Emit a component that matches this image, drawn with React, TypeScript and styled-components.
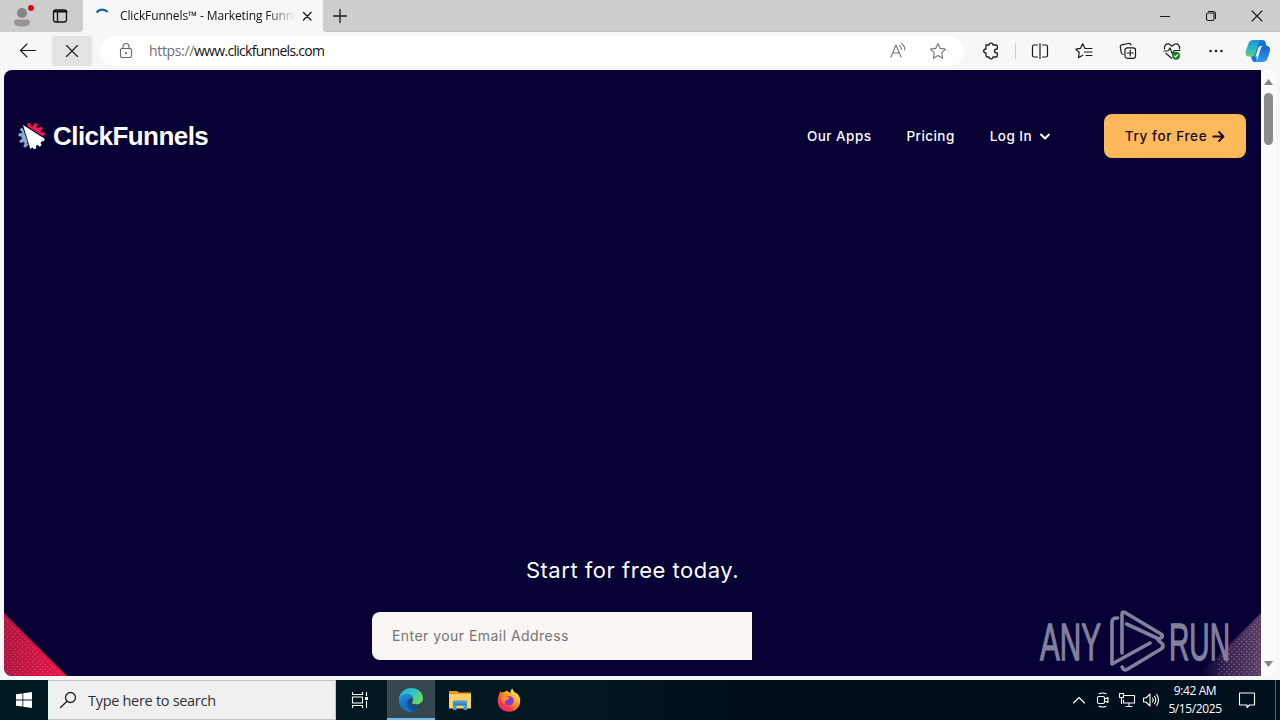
import React from 'react';
import styled, { createGlobalStyle } from 'styled-components';

const GlobalStyle = createGlobalStyle`
  *, *::before, *::after { box-sizing: border-box; }
  html, body { margin: 0; padding: 0; overflow: hidden; }
  svg { display: block; flex: none; }
`;

const uiFont = `"Open Sans", "Noto Sans", sans-serif`;
const siteFont = `Inter, "Liberation Sans", sans-serif`;

const Desktop = styled.div`
  width: 1280px;
  height: 720px;
  display: flex;
  flex-direction: column;
  background: #f7f7f7;
  font-family: ${uiFont};
  color: #111;
  overflow: hidden;
`;

/* ---------- tab strip ---------- */

const TabStrip = styled.div`
  display: flex;
  height: 32px;
  flex: none;
  background: #f7f7f7;
`;

const StripLeft = styled.div`
  width: 83px;
  height: 32px;
  display: flex;
  align-items: center;
  background: #cdcdcd;
  border-bottom-right-radius: 4px;
  padding-left: 10px;
  gap: 14px;
`;

const Tab = styled.div`
  width: 240px;
  height: 32px;
  display: flex;
  align-items: center;
  background: #f7f7f7;
  padding: 0 8px 0 12px;
`;

const TabTitle = styled.div`
  width: 177px;
  margin-left: 10px;
  margin-right: 2px;
  overflow: hidden;
  white-space: nowrap;
  font-size: 12px;
  line-height: 18px;
  letter-spacing: -0.12px;
  mask-image: linear-gradient(90deg, #000 146px, transparent 176px);
`;

const StripRest = styled.div`
  flex: 1;
  height: 32px;
  display: flex;
  align-items: center;
  background: #cdcdcd;
  border-bottom: 1px solid #c0c0c0;
  border-bottom-left-radius: 4px;
  padding-left: 9px;
`;

const WindowButtons = styled.div`
  display: flex;
  margin-left: auto;
`;

const WindowButton = styled.div`
  width: 46px;
  display: flex;
  align-items: center;
  justify-content: center;
`;

/* ---------- toolbar ---------- */

const Toolbar = styled.div`
  display: flex;
  align-items: center;
  height: 38px;
  flex: none;
  padding-left: 8px;
`;

const ToolButton = styled.div<{ $w: number; $active?: boolean }>`
  width: ${(p) => p.$w}px;
  height: 30px;
  display: flex;
  align-items: center;
  justify-content: center;
  border-radius: 4px;
  background: ${(p) => (p.$active ? '#e3e3e3' : 'transparent')};
`;

const Navigation = styled.div`
  display: flex;
  gap: 4px;
`;

const AddressBar = styled.div`
  width: 864px;
  height: 30px;
  margin-left: 8px;
  margin-right: 5px;
  padding: 0 16px;
  display: flex;
  align-items: center;
  border-radius: 15px;
  background: #fff;
`;

const Url = styled.div`
  flex: 1;
  margin-left: 13px;
  font-size: 14px;
  line-height: 20px;
  letter-spacing: -0.35px;
  white-space: nowrap;
`;

const Scheme = styled.span`
  color: #707070;
`;

const Host = styled.span`
  color: #111;
  letter-spacing: -0.7px;
`;

const AddressActions = styled.div`
  display: flex;
  gap: 20px;
`;

const Divider = styled.div`
  width: 1px;
  height: 16px;
  margin: 0 2px;
  background: #cfcfcf;
`;

/* ---------- page ---------- */

const Viewport = styled.div`
  display: flex;
  height: 606px;
  margin: 0 4px 4px;
  border-radius: 8px;
  overflow: hidden;
  background: #fcfcfc;
`;

const Page = styled.main`
  position: relative;
  width: 1257px;
  height: 606px;
  background: #060034;
  font-family: ${siteFont};
  color: #fff;
  display: flex;
  flex-direction: column;
`;

const Header = styled.header`
  display: flex;
  align-items: center;
  height: 44px;
  margin-top: 44px;
  padding: 0 15px 0 14px;
`;

const BrandName = styled.div`
  margin-left: 7px;
  font-family: "Liberation Sans", Arial, sans-serif;
  font-size: 26px;
  line-height: 30px;
  font-weight: 700;
  letter-spacing: -0.55px;
`;

const Nav = styled.nav`
  display: flex;
  margin-left: auto;
  align-items: center;
  gap: 35px;
  margin-right: 53px;
  padding-bottom: 1px;
`;

const NavLink = styled.a`
  display: flex;
  align-items: center;
  gap: 7px;
  font-size: 13.5px;
  line-height: 20px;
  font-weight: 500;
  letter-spacing: 0.45px;
  white-space: nowrap;
`;

const CtaButton = styled.button`
  width: 142px;
  height: 44px;
  border: 0;
  border-radius: 8px;
  background: #ffb95a;
  color: #17072d;
  font: 500 13.5px/20px ${siteFont};
  letter-spacing: 0.62px;
  display: flex;
  align-items: center;
  justify-content: center;
  gap: 5px;
  padding: 0;
  white-space: nowrap;
`;

const Heading = styled.h2`
  margin: 397px 0 0;
  height: 30px;
  font-size: 22px;
  line-height: 30px;
  font-weight: 400;
  letter-spacing: 0.52px;
  text-align: center;
`;

const EmailField = styled.div`
  width: 380px;
  height: 48px;
  margin: 27px 0 0 368px;
  padding-left: 20px;
  border-radius: 8px 0 0 8px;
  background: #faf6f3;
  color: #757575;
  font-size: 14px;
  line-height: 48px;
  letter-spacing: 0.45px;
`;

const Corner = styled.div<{ $side: 'left' | 'right' }>`
  position: absolute;
  bottom: 0;
  ${(p) => p.$side}: 0;
`;

const Watermark = styled.div`
  position: absolute;
  right: 28px;
  bottom: 2px;
`;

const ScrollBar = styled.div`
  width: 15px;
  display: flex;
  flex-direction: column;
  align-items: center;
  padding: 9px 0 9px;
`;

const Thumb = styled.div`
  width: 9px;
  height: 52px;
  margin-top: 8px;
  border-radius: 5px;
  background: #8b8b8b;
`;

const ScrollDown = styled.div`
  margin-top: auto;
`;

/* ---------- taskbar ---------- */

const Taskbar = styled.footer`
  display: flex;
  height: 40px;
  flex: none;
  background: linear-gradient(90deg, #001820 0, #001720 45%, #000d1c 60%, #00101c 100%);
`;

const TaskItem = styled.div<{ $w?: number; $active?: boolean }>`
  width: ${(p) => p.$w ?? 48}px;
  height: 40px;
  display: flex;
  align-items: center;
  justify-content: center;
  background: ${(p) => (p.$active ? '#34484e' : 'transparent')};
  border-bottom: ${(p) => (p.$active ? '2px solid #76b9ed' : '0')};
  padding-top: ${(p) => (p.$active ? '2px' : '0')};
`;

const Search = styled.div`
  width: 288px;
  height: 40px;
  display: flex;
  align-items: center;
  padding-left: 11px;
  gap: 11px;
  border: 1px solid #c4c4c4;
  border-left: 0;
  background: #f0f0f0;
  color: #303030;
  font-size: 14.5px;
  letter-spacing: -0.3px;
`;

const Apps = styled.div`
  display: flex;
  margin-left: 3px;
  gap: 1px;
`;

const Tray = styled.div`
  display: flex;
  margin-left: auto;
  color: #fff;
`;

const Clock = styled.div`
  width: 64px;
  text-align: center;
  font-size: 12px;
  line-height: 18px;
  letter-spacing: -0.4px;
  padding-top: 2px;
`;

const ShowDesktop = styled.div`
  width: 5px;
  border-left: 1px solid #59646b;
`;

/* ---------- icons ---------- */

type IconProps = {
  w?: number;
  h?: number;
  color?: string;
  sw?: number;
  children: React.ReactNode;
};

const Icon = ({ w = 20, h, color = '#1b1b1b', sw = 1.1, children }: IconProps) => (
  <svg
    width={w}
    height={h ?? w}
    viewBox={`0 0 ${w} ${h ?? w}`}
    fill="none"
    stroke={color}
    strokeWidth={sw}
    strokeLinecap="round"
    strokeLinejoin="round"
  >
    {children}
  </svg>
);

const STAR = 'M10 2.500l2.300 4.900 5.200.700-3.800 3.700.900 5.400-4.600-2.600-4.600 2.600.900-5.400-3.800-3.700 5.200-.700z';

const CopilotIcon = () => (
  <svg width="26" height="26" viewBox="0 0 26 26">
    <defs>
      <linearGradient id="cpA" x1="0" y1="0" x2="0" y2="1">
        <stop offset="0" stopColor="#1b93d8" />
        <stop offset=".5" stopColor="#25b7c8" />
        <stop offset="1" stopColor="#5fd07a" />
      </linearGradient>
      <linearGradient id="cpB" x1="0" y1="0" x2="0" y2="1">
        <stop offset="0" stopColor="#1a5fc4" />
        <stop offset="1" stopColor="#2a9df2" />
      </linearGradient>
    </defs>
    <path d="M13 2h4.500q2.300 0 3 2.300L21.500 8H17q-2 0-2.700 2.300L12 18q-1.500 6 2 6H10q-2.500 0-3.200-2.500L6 18l5-14z" fill="#1672d6" />
    <path d="M8.500 2H16q-1.800 1-2.500 3.500L10.500 15q-1 3.500-4 3.500H4q-4.500 0-3-6L3.700 5Q4.800 2 8.500 2z" fill="url(#cpA)" />
    <path d="M18 8h3.500q4.500 0 3.300 5.500l-2.500 7.500q-1.200 3-4.600 3H10q2-.8 2.700-3.200L15.500 11q.7-3 2.500-3z" fill="url(#cpB)" />
    <path d="M13.300 10q.6-1.700 2-2H17q-1.400.6-2 3l-1.500 5q-.6 2-2 2.500H9.800q1-.6 1.500-2.500z" fill="#f2fbff" />
  </svg>
);

const TOOTH = 'M-2 -9L-1.300 -13.300H1.300L2 -9z';

const BrandMark = () => (
  <svg width="28" height="28" viewBox="0 0 28 28">
    <g transform="translate(13.800 14)">
      <g fill="#f0194f">
        <path d="M-5 -8.500A10 10 0 0 1 10 0L6 1z" />
        {[-14, 18, 50, 80].map((a) => (
          <path key={a} d={TOOTH} transform={`rotate(${a})`} />
        ))}
      </g>
      <g fill="#86a9d2">
        <path d="M-7.500 -7A10 10 0 0 0 -5 8.800L-2 0z" />
        {[-84, -116, -146, -58].map((a) => (
          <path key={a} d={TOOTH} transform={`rotate(${a})`} />
        ))}
      </g>
      <path d="M-9.500 -12L13 2.500 9 8-1 13.500z" fill="#fff" stroke="#060034" strokeWidth="1.600" />
      <g fill="#fff">
        <path d="M10 2.500A10 10 0 0 1 -1.500 10L0 0z" />
        {[108, 138, 166].map((a) => (
          <path key={a} d={TOOTH} transform={`rotate(${a})`} />
        ))}
        <path d="M-8.800 -11L12.500 2.600 6 5-1.500 13z" />
      </g>
    </g>
  </svg>
);

const EdgeIcon = () => (
  <svg width="26" height="26" viewBox="0 0 26 26">
    <defs>
      <linearGradient id="edTop" x1="0" y1="0" x2="1" y2=".6">
        <stop offset="0" stopColor="#2aa7dd" />
        <stop offset=".5" stopColor="#2dc2c9" />
        <stop offset="1" stopColor="#65dd62" />
      </linearGradient>
      <linearGradient id="edMid" x1="0" y1="0" x2=".6" y2="1">
        <stop offset="0" stopColor="#2398df" />
        <stop offset="1" stopColor="#0b58b0" />
      </linearGradient>
    </defs>
    <path d="M1 13C1 6 6.500 1 13 1c7 0 12 4.700 12 10 0 4-3 6.300-6.500 6.300-3 0-4.500-1-4.500-2 0-.8 1.200-1.200 1.200-3C15.200 9.800 12.500 7.500 9 7.500c-4 0-7 2.500-8 5.500z" fill="url(#edTop)" />
    <path d="M1 13c.5-3.500 3.800-6 8-6 3.700 0 6.200 2.300 6.200 5-1-1.600-5.700-1-5.700 3.500 0 5 4.500 8 8.500 7.700C11 27.500 1 23 1 13z" fill="url(#edMid)" />
    <path d="M9.500 15c-.8 3.700 2.500 7.500 7.500 7.500 3 0 5.500-1.700 7-3.700.4-.5 0-.8-.5-.6-5 2.400-12 .6-11.300-5.700-1.400.3-2.400 1.200-2.700 2.500z" fill="#124c93" />
    <path d="M9 16c-2 5 3.500 9.700 8 8.400-7 2-12.500-1-12-6 .2-2.500 2-5.500 6-6.400-1 .8-1.700 2-2 4z" fill="#1673c7" />
  </svg>
);

const ExplorerIcon = () => (
  <svg width="22" height="20" viewBox="0 0 22 20">
    <path d="M0 1h8l2 1.500h12V7H0z" fill="#e59a24" />
    <path d="M0 4h22v14.500H0z" fill="#fad165" />
    <path d="M4 20v-8q0-1.500 1.500-1.500h11Q18 10.500 18 12v8h-3.500v-4h-7v4z" fill="#4a9ad2" />
    <path d="M4 13.500h14V15H4z" fill="#347eb5" />
  </svg>
);

const FirefoxIcon = () => (
  <svg width="24" height="24" viewBox="0 0 24 24">
    <defs>
      <linearGradient id="ff" x1=".85" y1=".1" x2=".15" y2=".9">
        <stop offset="0" stopColor="#fff04a" />
        <stop offset=".4" stopColor="#ff9a24" />
        <stop offset=".75" stopColor="#ff3a48" />
        <stop offset="1" stopColor="#e7217f" />
      </linearGradient>
    </defs>
    <path d="M2.500 5.500C2.600 4.500 3 3.700 3.600 3l.6 2C5 4.200 6.200 3.700 7.600 4 9 2 10 2.500 11 3.500L13.500 5C13.500 3 14 1.500 15.500.500c.2 2.200 2 3.300 3.500 5l.8-.5c2.400 2.500 3.400 5 3.400 8 0 6-5 10.800-11.200 10.800S.700 19.200.700 13c0-2.800.7-5.300 1.800-7.500z" fill="url(#ff)" />
    <circle cx="12" cy="12.700" r="4.700" fill="#7c3fd6" />
    <path d="M4.500 9c2-1.500 3.500-1.200 5-.5L13 9.500c0 1.500-3 1.500-3.200 3C8 12.500 7 14 8 16c-3-1-4.500-4-3.500-7z" fill="#ff8a27" />
  </svg>
);

const AnyRunMark = () => (
  <svg width="194" height="64" viewBox="0 0 194 64">
    <g
      fill="#82809c"
      stroke="#82809c"
      strokeWidth="1.300"
      fontFamily='"Liberation Sans", sans-serif'
      fontSize="51"
    >
      <text x="1" y="49.500" textLength="61" lengthAdjust="spacingAndGlyphs">ANY</text>
      <text x="130" y="49.500" textLength="61" lengthAdjust="spacingAndGlyphs">RUN</text>
    </g>
    <g fill="none" stroke="#82809c" strokeWidth="3.600" strokeLinejoin="round" strokeLinecap="round">
      <path d="M78.500 8q-5.500-.5-5.500 4v42L111 33" />
      <path d="M83 43V4q0-3 3-1.500L122 24q2.500 2 .5 3.500L120 29 87.500 14" />
      <path d="M83 57q2 4 5 2.500L122 39q3-2 1.500-5L119 30" />
    </g>
  </svg>
);

export default function App() {
  return (
    <Desktop>
      <GlobalStyle />
      <TabStrip>
        <StripLeft>
          <svg width="26" height="28" viewBox="0 0 26 28">
            <circle cx="12" cy="11" r="5" fill="#858585" />
            <path d="M4 20q0-2.500 2.500-2.500h11Q20 17.500 20 20q0 4.500-8 4.500T4 20z" fill="#9a9592" />
            <circle cx="21" cy="6" r="3" fill="#e3001b" />
          </svg>
          <Icon w={20} color="#111" sw={1.3}>
            <rect x="3.500" y="4" width="13" height="12" rx="2.500" />
            <path d="M4 5.500h12.500" strokeWidth="2.200" />
            <path d="M7.500 6v9.500" />
          </Icon>
        </StripLeft>
        <Tab>
          <Icon w={15} h={16} color="#1c63a8" sw={2.2}>
            <path d="M1.500 4.500C4.500.8 9.700.8 12.700 4" strokeLinecap="butt" />
          </Icon>
          <TabTitle>ClickFunnels™ - Marketing Funnels</TabTitle>
          <Icon w={16} sw={1.4}>
            <path d="M4.500 4.500l7.500 7.500M12 4.500L4.500 12" />
          </Icon>
        </Tab>
        <StripRest>
          <Icon w={16} sw={1.3}>
            <path d="M8 1.500v13M1.500 8h13" />
          </Icon>
          <WindowButtons>
            <WindowButton>
              <Icon w={12}><path d="M1.500 6.500h9" /></Icon>
            </WindowButton>
            <WindowButton>
              <Icon w={12}>
                <rect x="1.500" y="3" width="7.500" height="7.500" rx="1.500" />
                <path d="M3.500 1.500H8Q10.500 1.500 10.500 4v4.500" />
              </Icon>
            </WindowButton>
            <WindowButton>
              <Icon w={12}><path d="M1 1l10 10M11 1L1 11" /></Icon>
            </WindowButton>
          </WindowButtons>
        </StripRest>
      </TabStrip>

      <Toolbar>
        <Navigation>
          <ToolButton $w={40}>
            <Icon><path d="M2.500 9.500h15M9 3L2.500 9.500 9 16" /></Icon>
          </ToolButton>
          <ToolButton $w={40} $active>
            <Icon><path d="M4.500 4.500l11 11M15.500 4.500l-11 11" /></Icon>
          </ToolButton>
        </Navigation>
        <AddressBar>
          <Icon color="#666">
            <rect x="4.500" y="7.500" width="11" height="9" rx="1.500" />
            <path d="M7 7.500V5.500a3 3 0 016 0v2" />
            <circle cx="10" cy="12" r=".5" fill="#666" />
          </Icon>
          <Url>
            <Scheme>https://</Scheme>
            <Host>www.clickfunnels.com</Host>
          </Url>
          <AddressActions>
            <Icon color="#777">
              <path d="M3 16L8 4l5 12M4.800 12h6.500" />
              <path d="M11.500 4.500q2 1.500 2 4M13.500 2.500q3.500 2.500 3.300 6.500" />
            </Icon>
            <Icon color="#777"><path d={STAR} /></Icon>
          </AddressActions>
        </AddressBar>
        <ToolButton $w={44}>
          <Icon sw={1.3}>
            <path d="M5 4h3q0-1.800 2-1.800T12 4h3q1.300 0 1.300 1.300V8q-2.800 0-2.800 2t2.800 2v2.700q0 1.300-1.300 1.300h-3q0 1.800-2 1.800T8 16H6.500Q5 16 5 14.500V12q-2.300 0-2.300-2T5 8z" />
          </Icon>
        </ToolButton>
        <Divider />
        <ToolButton $w={44}>
          <Icon sw={1.2}>
            <path d="M7.500 4H4Q2.500 4 2.500 5.500v9Q2.500 16 4 16h3.500M12.500 4H16q1.500 0 1.500 1.500v9Q17.500 16 16 16h-3.500M10 2.500v15" />
          </Icon>
        </ToolButton>
        <ToolButton $w={44}>
          <Icon sw={1.2}>
            <path d="M11 7.500L8.700 2.800 6.500 7.300l-4.700.8 3.500 3.400-.9 5.200 4.400-2.400M11 7.500h7M10.500 11H18M12 14.500h6" />
          </Icon>
        </ToolButton>
        <ToolButton $w={44}>
          <Icon sw={1.2}>
            <rect x="7" y="6.800" width="10.500" height="10.500" rx="2.200" />
            <path d="M5 13.500Q3.500 13 3.200 11.500L2.300 6Q2 4.300 3.700 3.800L10.500 2.500q2-.3 2.500 1.500M12.200 9v6M9.200 12h6" />
          </Icon>
        </ToolButton>
        <ToolButton $w={44}>
          <Icon sw={1.2}>
            <path d="M2.500 8Q2 5.500 3.500 4t4-.8L10 5.200l2.500-2q2.500-.8 4 .8t1 4M2 10h4l2-3 2.500 6 1.800-3.500H18M4 12.200l5.500 5" />
            <circle cx="14" cy="14.700" r="4" fill="#14821d" stroke="none" />
            <path d="M12.300 14.900l1.200 1.200 2.300-2.500" stroke="#fff" />
          </Icon>
        </ToolButton>
        <ToolButton $w={44}>
          <Icon>
            <g fill="#222" stroke="none">
              <circle cx="4.500" cy="10" r="1.300" />
              <circle cx="10" cy="10" r="1.300" />
              <circle cx="15.500" cy="10" r="1.300" />
            </g>
          </Icon>
        </ToolButton>
        <ToolButton $w={40}>
          <CopilotIcon />
        </ToolButton>
      </Toolbar>

      <Viewport>
        <Page>
          <Header>
            <BrandMark />
            <BrandName>ClickFunnels</BrandName>
            <Nav>
              <NavLink>Our Apps</NavLink>
              <NavLink>Pricing</NavLink>
              <NavLink>
                Log In
                <Icon w={12} color="#fff" sw={2}>
                  <path d="M2 4.500l4 4 4-4" />
                </Icon>
              </NavLink>
            </Nav>
            <CtaButton>
              Try for Free
              <Icon w={13} color="#17072d" sw={1.8}>
                <path d="M1.200 6.500h10M7 2l4.500 4.500L7 11" />
              </Icon>
            </CtaButton>
          </Header>
          <Heading>Start for free today.</Heading>
          <EmailField>Enter your Email Address</EmailField>
          <Corner $side="left">
            <svg width="63" height="63" viewBox="0 0 63 63">
              <defs>
                <linearGradient id="red" x1="0" y1="0" x2="1" y2="0">
                  <stop offset="0" stopColor="#ae1540" />
                  <stop offset="1" stopColor="#ec1448" />
                </linearGradient>
                <pattern id="dots" width="5" height="5" patternUnits="userSpaceOnUse">
                  <circle cx="1.200" cy="1.200" r=".7" fill="#e0708a" opacity=".6" />
                  <circle cx="3.700" cy="3.700" r=".7" fill="#e0708a" opacity=".6" />
                </pattern>
              </defs>
              <path d="M0 0l63 63H0z" fill="url(#red)" />
              <path d="M0 2l61 61H0z" fill="url(#dots)" />
            </svg>
          </Corner>
          <Corner $side="right">
            <svg width="63" height="63" viewBox="0 0 63 63">
              <defs>
                <linearGradient id="mauve" x1="0" y1="0" x2="1" y2="0">
                  <stop offset="0" stopColor="#4c3560" stopOpacity="0" />
                  <stop offset=".5" stopColor="#4c3560" stopOpacity=".7" />
                  <stop offset="1" stopColor="#5c3f68" />
                </linearGradient>
                <pattern id="dots2" width="5" height="5" patternUnits="userSpaceOnUse">
                  <circle cx="1.200" cy="1.200" r=".8" fill="#b48b8e" opacity=".65" />
                  <circle cx="3.700" cy="3.700" r=".8" fill="#b48b8e" opacity=".65" />
                </pattern>
              </defs>
              <path d="M63 0L0 63h63z" fill="url(#mauve)" />
              <path d="M63 4L20 47v16h43z" fill="url(#dots2)" />
            </svg>
          </Corner>
          <Watermark>
            <AnyRunMark />
          </Watermark>
        </Page>
        <ScrollBar>
          <svg width="9" height="6" viewBox="0 0 9 6"><path d="M4.500 0L9 6H0z" fill="#858585" /></svg>
          <Thumb />
          <ScrollDown>
            <svg width="9" height="6" viewBox="0 0 9 6"><path d="M0 0h9L4.500 6z" fill="#858585" /></svg>
          </ScrollDown>
        </ScrollBar>
      </Viewport>

      <Taskbar>
        <TaskItem>
          <svg width="16" height="16" viewBox="0 0 16 16">
            <path d="M0 2.300l6.500-.9v6.200H0zM7.300 1.300L16 0v7.600H7.300zM0 8.400h6.500v6.200L0 13.700zM7.300 8.400H16V16l-8.700-1.300z" fill="#fff" />
          </svg>
        </TaskItem>
        <Search>
          <Icon w={18} sw={1.3} color="#222">
            <circle cx="11.500" cy="6.500" r="5" />
            <path d="M8 10.200L1.500 16.500" />
          </Icon>
          Type here to search
        </Search>
        <TaskItem>
          <Icon w={18} color="#fff">
            <path d="M1.500 1v2.500h10V1M1.500 17v-2.500h10V17M15.500 1v4M15.500 10v7" strokeLinecap="butt" />
            <rect x="1.500" y="6" width="10" height="6" />
            <path d="M14 6h3v3h-3z" fill="#fff" stroke="none" />
          </Icon>
        </TaskItem>
        <Apps>
          <TaskItem $active><EdgeIcon /></TaskItem>
          <TaskItem><ExplorerIcon /></TaskItem>
          <TaskItem><FirefoxIcon /></TaskItem>
        </Apps>
        <Tray>
          <TaskItem $w={24}>
            <Icon w={14} color="#fff"><path d="M1.500 10L7 4.500l5.500 5.500" /></Icon>
          </TaskItem>
          <TaskItem $w={24}>
            <Icon w={16} color="#fff">
              <rect x="2.500" y="4.500" width="7" height="7" rx="1.500" />
              <path d="M9.500 7.300L13 5.500v5L9.500 9M4 1.800q4-1.600 7 0M4 14.200q4 1.600 7 0" />
            </Icon>
          </TaskItem>
          <TaskItem $w={24}>
            <Icon w={18} color="#fff">
              <path d="M6.500 4.500h10v7.500h-11V9M11 12v3M8 15.500h6M1.500 2.500h4v4h-4zM3.500 6.500v6" />
            </Icon>
          </TaskItem>
          <TaskItem $w={24}>
            <Icon w={18} color="#fff">
              <path d="M1.500 7h2.500l4-4v12l-4-4H1.500zM10.500 7q1.300 2 0 4M12.500 5.200q2.500 3.800 0 7.600M14.700 3.500q3.600 5.500 0 11" />
            </Icon>
          </TaskItem>
          <Clock>
            9:42 AM
            <br />
            5/15/2025
          </Clock>
          <TaskItem $w={40}>
            <Icon w={18} color="#fff">
              <path d="M1.500 2h15v12h-5L9 16.500V14H1.500z" />
            </Icon>
          </TaskItem>
          <TaskItem $w={8} />
          <ShowDesktop />
        </Tray>
      </Taskbar>
    </Desktop>
  );
}
